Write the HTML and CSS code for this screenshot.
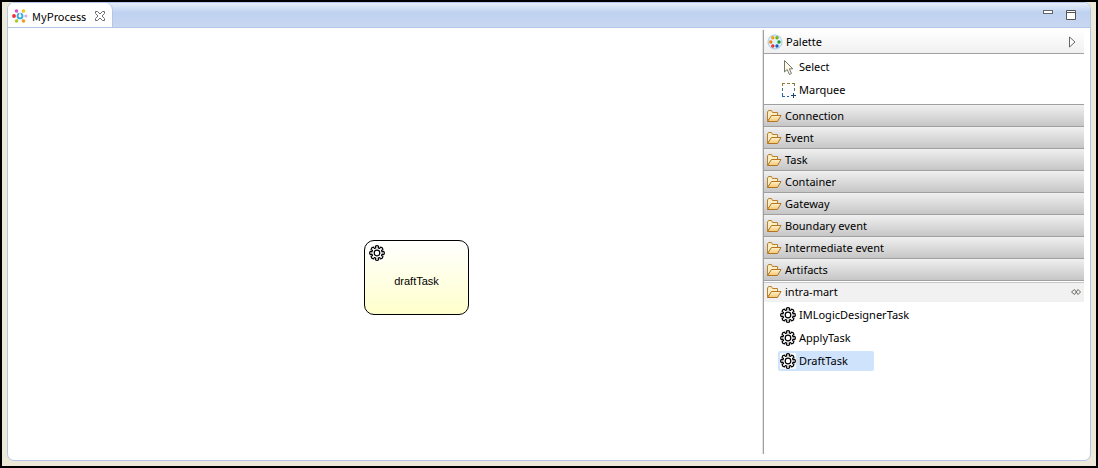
FILE: index.html
```html
<!DOCTYPE html>
<html lang="en">

<head>
  <meta charset="UTF-8">
  <meta name="viewport" content="width=device-width, initial-scale=1.0">
  <title>MyProcess</title>
  <link rel="stylesheet" href="styles.css">
</head>

<body>
  <!-- shared icons -->
  <svg class="sprite" aria-hidden="true">
    <defs>
      <linearGradient id="folder-fill" x1="0" y1="0" x2="0" y2="1">
        <stop offset="0" stop-color="#fff3cf" />
        <stop offset="1" stop-color="#f5c66c" />
      </linearGradient>
    </defs>
    <symbol id="folder" viewBox="0 0 16 16">
      <path d="M1.500 12.500V4L2.500 2.500H5.500L6.500 4.500H11.500V7.500H6L1.500 13.500Z" fill="#fdeec2" stroke="#b9802e" />
      <path d="M1.500 13.500L5.500 7.500H15L11.500 13.500Z" fill="url(#folder-fill)" stroke="#b07425" />
    </symbol>
    <symbol id="gear" viewBox="0 0 16 16">
      <rect width="16" height="16" fill="#fff" fill-opacity=".8" />
      <g fill="#fff" stroke="#000" stroke-width="1.2" stroke-linejoin="round">
        <path d="M6.800 3L6.400 1.300Q8 0 9.600 1.300L9.200 3L10.600 3.500L11.600 2.100Q13.600 2.300 13.900 4.400L12.500 5.400L13 6.800L14.700 6.400Q16 8 14.700 9.600L13 9.200L12.500 10.600L13.900 11.600Q13.600 13.700 11.600 13.900L10.600 12.500L9.200 13L9.600 14.700Q8 16 6.400 14.700L6.800 13L5.400 12.500L4.400 13.900Q2.400 13.700 2.100 11.600L3.500 10.600L3 9.200L1.300 9.600Q0 8 1.300 6.400L3 6.800L3.500 5.400L2.100 4.400Q2.400 2.300 4.400 2.100L5.400 3.500Z" />
        <circle cx="8" cy="8" r="2.800" />
      </g>
    </symbol>
  </svg>

  <div class="editor">
    <header class="tab-bar">
      <div class="tab">
        <svg class="icon" viewBox="0 0 16 16" aria-hidden="true">
          <circle cx="8" cy="8" r="2.400" fill="#fff" stroke="#35aee2" stroke-width="1.900" />
          <path d="M8 5V8" stroke="#fff" stroke-width="1.200" />
          <path d="M3 8H5M11 8H13M5 3.500L6 5M11 3.500L10 5M5 12.500L6 11M11 12.500L10 11" stroke="#c9d3dc" />
          <circle cx="2" cy="8" r="1.900" fill="#f0303a" />
          <circle cx="14" cy="8" r="1.500" fill="#c9b4ee" />
          <circle cx="4.500" cy="3" r="1.800" fill="#d957c5" />
          <circle cx="11.500" cy="3" r="1.800" fill="#f3c81c" />
          <circle cx="4.500" cy="13" r="1.800" fill="#b0cb28" />
          <circle cx="11.500" cy="13" r="1.800" fill="#f39a1e" />
        </svg>
        <span class="tab-title">MyProcess</span>
        <button class="btn" aria-label="Close">
          <svg class="control-icon" viewBox="0 0 12 12">
            <path d="M1.500 1.500H3.500L6 4L8.500 1.500H10.500V3.500L8 6L10.500 8.500V10.500H8.500L6 8L3.500 10.500H1.500V8.500L4 6L1.500 3.500Z" fill="#fff" stroke="#6c6c6c" />
          </svg>
        </button>
      </div>
      <div class="window-controls">
        <button class="btn" aria-label="Minimize">
          <svg class="control-icon" viewBox="0 0 12 12">
            <rect x="1.500" y="1.500" width="9" height="3" fill="#fff" stroke="#666" />
          </svg>
        </button>
        <button class="btn" aria-label="Maximize">
          <svg class="control-icon" viewBox="0 0 12 12">
            <path d="M1.500 1.500H10.500V10.500H1.500ZM1.500 3.500H10.500" fill="#fff" stroke="#555" />
          </svg>
        </button>
      </div>
    </header>

    <div class="workspace">
      <main class="canvas">
        <div class="task-node">
          <svg class="icon task-icon" aria-hidden="true"><use href="#gear" /></svg>
          <span>draftTask</span>
        </div>
      </main>

      <aside class="palette">
        <div class="palette-header">
          <svg class="icon" viewBox="0 0 16 16" aria-hidden="true">
            <circle cx="8" cy="8" r="7" fill="#e3f0fb" stroke="#a8c8e6" />
            <g fill="#fff" stroke-width="1.400">
              <circle cx="5.800" cy="3.800" r="1" stroke="#f0a000" />
              <circle cx="10" cy="3.800" r="1" stroke="#6fae10" />
              <circle cx="3.800" cy="8" r="1" stroke="#f08000" />
              <circle cx="12" cy="8" r="1" stroke="#109a18" />
              <circle cx="5.800" cy="12" r="1" stroke="#e02c2c" />
              <circle cx="10" cy="12" r="1" stroke="#1058c8" />
            </g>
          </svg>
          <span class="palette-title">Palette</span>
          <button class="btn" aria-label="Hide palette">
            <svg class="arrow-icon" viewBox="0 0 8 12">
              <path d="M1.500 1L7 6L1.500 11Z" fill="#fff" stroke="#666" />
            </svg>
          </button>
        </div>

        <div class="tools">
          <button class="btn tool">
            <svg class="icon" viewBox="0 0 16 16" aria-hidden="true">
              <path d="M4.500 1.500V13L7.200 10.500L9.500 15.500L11.500 14.500L9.300 9.800H12.800Z" fill="#fffde8" stroke="#77756c" />
            </svg>
            Select
          </button>
          <button class="btn tool">
            <svg class="icon" viewBox="0 0 16 16" aria-hidden="true">
              <path d="M2 1.500H5M7 1.500H10M12 1.500H15M2.500 1V4M14.500 1V4" fill="none" stroke="#8a7a35" />
              <path d="M2.500 6V9M14.500 6V9" stroke="#50756c" />
              <path d="M2.500 11V14M2 14.500H5M7 14.500H9" fill="none" stroke="#2862a8" />
              <path d="M11 13.500H16M13.500 11V16" stroke="#1c3f73" />
            </svg>
            Marquee
          </button>
        </div>

        <nav class="drawers">
          <button class="btn drawer"><svg class="icon"><use href="#folder" /></svg>Connection</button>
          <button class="btn drawer"><svg class="icon"><use href="#folder" /></svg>Event</button>
          <button class="btn drawer"><svg class="icon"><use href="#folder" /></svg>Task</button>
          <button class="btn drawer"><svg class="icon"><use href="#folder" /></svg>Container</button>
          <button class="btn drawer"><svg class="icon"><use href="#folder" /></svg>Gateway</button>
          <button class="btn drawer"><svg class="icon"><use href="#folder" /></svg>Boundary event</button>
          <button class="btn drawer"><svg class="icon"><use href="#folder" /></svg>Intermediate event</button>
          <button class="btn drawer"><svg class="icon"><use href="#folder" /></svg>Artifacts</button>
          <button class="btn drawer open">
            <svg class="icon"><use href="#folder" /></svg>intra-mart
            <svg class="pin-icon" viewBox="0 0 12 8" aria-hidden="true">
              <path d="M4.500 1.500L1.500 4L4.500 6.500M4.500 1.500L8 6.500M4.500 6.500L8 1.500M8 1.500L10.500 4L8 6.500" fill="none" stroke="#6e6b66" />
            </svg>
          </button>
        </nav>

        <div class="entries">
          <button class="btn tool"><svg class="icon"><use href="#gear" /></svg>IMLogicDesignerTask</button>
          <button class="btn tool"><svg class="icon"><use href="#gear" /></svg>ApplyTask</button>
          <button class="btn tool selected"><svg class="icon"><use href="#gear" /></svg>DraftTask</button>
        </div>
      </aside>
    </div>
  </div>
</body>

</html>
```
FILE: styles.css
```css
html {
  box-sizing: border-box;
}

*,
*::before,
*::after {
  box-sizing: inherit;
}

body {
  display: flex;
  height: 100vh;
  margin: 0;
  padding: 0 5px 5px;
  border: 2px solid #000;
  background-color: #ece9d8;
  color: #000;
  font: 11px/16px "Noto Sans", "Open Sans", sans-serif;
}

.sprite {
  position: absolute;
  width: 0;
  height: 0;
}

.icon {
  flex: none;
  width: 16px;
  height: 16px;
}

.btn {
  display: flex;
  align-items: center;
  padding: 0;
  border: 0;
  background: none;
  color: inherit;
  font: inherit;
  cursor: pointer;
}

.editor {
  display: flex;
  flex: 1;
  flex-direction: column;
  overflow: hidden;
  border: 1px solid #b4c5e8;
  border-radius: 7px;
  background-color: #fff;
}

/* tabs */
.tab-bar {
  display: flex;
  justify-content: space-between;
  height: 24px;
  background: linear-gradient(#e6effb, #bed2f0 40%, #c9d7f1);
}

.tab {
  display: flex;
  align-items: center;
  gap: 4px;
  height: 25px;
  padding: 0 6px 0 4px;
  border-right: 1px solid #b4c5e8;
  border-radius: 0 7px 0 0;
  background-color: #fff;
}

.tab-title {
  margin-right: 4px;
  font: 11px/16px "Noto Sans CJK JP", sans-serif;
}

.control-icon {
  width: 12px;
  height: 12px;
}

.window-controls {
  display: flex;
  align-items: center;
  gap: 11px;
  padding-right: 13px;
}

/* editor area */
.workspace {
  display: flex;
  flex: 1;
  border-top: 1px solid #b4c5e8;
}

.canvas {
  position: relative;
  flex: 1;
}

.task-node {
  display: flex;
  position: absolute;
  top: 212px;
  left: 356px;
  align-items: center;
  justify-content: center;
  width: 105px;
  height: 75px;
  padding-top: 7px;
  border: 1px solid #000;
  border-radius: 10px;
  background: linear-gradient(#fff, #ffffcc);
  font: 11px/16px "Liberation Sans", Arial, sans-serif;
}

.task-icon {
  position: absolute;
  top: 4px;
  left: 4px;
}

/* palette */
.palette {
  width: 321px;
  margin: 2px 6px 6px 0;
  border-left: 1px solid #a0a0a0;
  box-shadow: -1px 0 #e3e3e3;
}

.palette-header {
  display: flex;
  align-items: center;
  gap: 3px;
  height: 24px;
  padding: 0 8px 0 3px;
  border-bottom: 1px solid #a0a0a0;
  background: linear-gradient(#fff, #f0f0f0);
}

.palette-title {
  flex: 1;
}

.arrow-icon {
  width: 8px;
  height: 12px;
}

.tools {
  padding: 3px 0 1px 14px;
}

.entries {
  padding: 3px 0 0 14px;
}

.tool {
  gap: 3px;
  height: 20px;
  min-width: 96px;
  margin-bottom: 3px;
  padding: 0 2px;
  border-radius: 2px;
}

.tool.selected {
  background-color: #cfe3fc;
}

.drawer {
  gap: 3px;
  width: 100%;
  height: 22px;
  padding: 0 2px;
  border-top: 1px solid #a0a0a0;
  background: linear-gradient(#f0f0f0, #c6c6c6);
}

.drawer.open {
  box-shadow: inset 0 1px #fff, inset 0 2px #c8c8c8;
  background: #f1f1f1;
}

.pin-icon {
  width: 12px;
  height: 8px;
  margin-left: auto;
}
```
